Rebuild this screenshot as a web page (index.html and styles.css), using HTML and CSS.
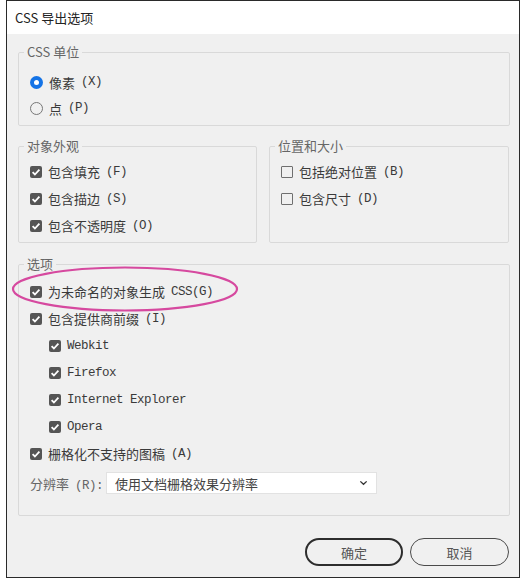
FILE: index.html
```html
<!DOCTYPE html>
<html lang="zh-CN">
<head>
    <meta charset="UTF-8">
    <title>CSS 导出选项</title>
    <link rel="stylesheet" href="styles.css">
</head>
<body>
    <div class="dialog">
        <div class="titlebar">CSS 导出选项</div>

        <div class="content">
            <fieldset class="group units">
                <legend>CSS 单位</legend>
                <div class="row"><span class="radio on"></span>像素<span class="key">(X)</span></div>
                <div class="row"><span class="radio"></span>点<span class="key">(P)</span></div>
            </fieldset>

            <div class="pair">
                <fieldset class="group">
                    <legend>对象外观</legend>
                    <div class="row tall"><span class="check on"><svg viewBox="0 0 12 12"><path d="M2.6 6.2l2.3 2.3 4.5-4.8"/></svg></span>包含填充<span class="key">(F)</span></div>
                    <div class="row tall"><span class="check on"><svg viewBox="0 0 12 12"><path d="M2.6 6.2l2.3 2.3 4.5-4.8"/></svg></span>包含描边<span class="key">(S)</span></div>
                    <div class="row tall"><span class="check on"><svg viewBox="0 0 12 12"><path d="M2.6 6.2l2.3 2.3 4.5-4.8"/></svg></span>包含不透明度<span class="key">(O)</span></div>
                </fieldset>
                <fieldset class="group">
                    <legend>位置和大小</legend>
                    <div class="row tall"><span class="check"></span>包括绝对位置<span class="key">(B)</span></div>
                    <div class="row tall"><span class="check"></span>包含尺寸<span class="key">(D)</span></div>
                </fieldset>
            </div>

            <fieldset class="group options">
                <legend>选项</legend>
                <div class="row tall"><span class="check on"><svg viewBox="0 0 12 12"><path d="M2.6 6.2l2.3 2.3 4.5-4.8"/></svg></span>为未命名的对象生成<span class="key">CSS(G)</span></div>
                <div class="row tall"><span class="check on"><svg viewBox="0 0 12 12"><path d="M2.6 6.2l2.3 2.3 4.5-4.8"/></svg></span>包含提供商前缀<span class="key">(I)</span></div>
                <div class="row tall sub"><span class="check on"><svg viewBox="0 0 12 12"><path d="M2.6 6.2l2.3 2.3 4.5-4.8"/></svg></span><span class="en">Webkit</span></div>
                <div class="row tall sub"><span class="check on"><svg viewBox="0 0 12 12"><path d="M2.6 6.2l2.3 2.3 4.5-4.8"/></svg></span><span class="en">Firefox</span></div>
                <div class="row tall sub"><span class="check on"><svg viewBox="0 0 12 12"><path d="M2.6 6.2l2.3 2.3 4.5-4.8"/></svg></span><span class="en">Internet Explorer</span></div>
                <div class="row tall sub"><span class="check on"><svg viewBox="0 0 12 12"><path d="M2.6 6.2l2.3 2.3 4.5-4.8"/></svg></span><span class="en">Opera</span></div>
                <div class="row tall"><span class="check on"><svg viewBox="0 0 12 12"><path d="M2.6 6.2l2.3 2.3 4.5-4.8"/></svg></span>栅格化不支持的图稿<span class="key">(A)</span></div>
                <div class="row resolution">
                    <span class="field-label">分辨率<span class="key">(R):</span></span>
                    <div class="select">
                        <span>使用文档栅格效果分辨率</span>
                        <svg class="chevron" viewBox="0 0 10 6"><path d="M1.5 1.2l3.5 3.3 3.5-3.3"/></svg>
                    </div>
                </div>
            </fieldset>
        </div>

        <div class="footer">
            <button class="btn primary">确定</button>
            <button class="btn">取消</button>
        </div>

        <!-- annotation drawn over the screenshot -->
        <svg class="mark" viewBox="0 0 240 50">
            <ellipse cx="117" cy="24" rx="112" ry="21.5"/>
        </svg>
    </div>
</body>
</html>
```

FILE: styles.css
```css
body {
    margin: 0;
    background-color: #fff;
    font-family: "Noto Sans CJK SC", sans-serif;
    color: #3a3a3a;
}

.dialog {
    position: relative;
    width: 514px;
    height: 578px;
    margin-left: 6px;
    box-sizing: border-box;
    border: 1px solid #2a2a2a;
    display: flex;
    flex-direction: column;
    background-color: #f0f0f0;
}

.titlebar {
    height: 33px;
    line-height: 33px;
    padding-left: 8px;
    background-color: #fff;
    font-size: 13px;
    color: #222;
}

.content {
    padding: 0 9px 0 11px;
}

.group {
    margin: 0;
    min-width: 0;
    padding: 0 10px 3px 11px;
    border: 1px solid #d9d9d9;
    border-radius: 2px;
}

.group legend {
    margin-left: -6px;
    padding: 0 3px;
    line-height: 18px;
    font-size: 13px;
    color: #666;
}

.units {
    margin-top: 9px;
    padding-top: 8px;
    padding-bottom: 4px;
}

.pair {
    display: grid;
    grid-template-columns: 239px 240px;
    gap: 12px;
    margin-top: 11px;
}

.pair .group {
    padding-top: 3px;
}

.options {
    margin-top: 12px;
    padding-top: 5px;
    padding-bottom: 19px;
}

.row {
    display: flex;
    align-items: center;
    height: 26px;
    font-size: 13px;
    white-space: nowrap;
}

.row.tall {
    height: 27px;
}

.row.sub {
    padding-left: 19px;
}

.key,
.en {
    font-family: "Liberation Mono", monospace;
    font-size: 12.5px;
    letter-spacing: -0.5px;
}

.key {
    margin-left: 6px;
}

.radio {
    width: 13px;
    height: 13px;
    margin-right: 6px;
    border: 1px solid #777;
    border-radius: 50%;
    box-sizing: border-box;
    display: flex;
    align-items: center;
    justify-content: center;
}

.radio.on {
    border: none;
    background-color: #1473e6;
}

.radio.on::after {
    content: "";
    width: 5px;
    height: 5px;
    border-radius: 50%;
    background-color: #fff;
}

.check {
    width: 12px;
    height: 12px;
    margin-right: 6px;
    border: 1px solid #6f6f6f;
    border-radius: 1px;
    box-sizing: border-box;
    display: flex;
}

.check.on {
    border: none;
    border-radius: 2px;
    background-color: #555;
}

.check svg {
    width: 12px;
    height: 12px;
    fill: none;
    stroke: #fff;
    stroke-width: 1.8;
}

.resolution {
    margin-top: 3px;
    gap: 3px;
}

.field-label {
    color: #666;
}

.select {
    width: 271px;
    height: 22px;
    box-sizing: border-box;
    padding: 0 8px;
    border: 1px solid #e2e2e2;
    background-color: #fff;
    display: flex;
    align-items: center;
    justify-content: space-between;
    color: #444;
}

.chevron {
    width: 9px;
    height: 6px;
    fill: none;
    stroke: #333;
    stroke-width: 1.5;
}

.footer {
    display: flex;
    justify-content: flex-end;
    gap: 7px;
    padding: 22px 10px 0 0;
}

.btn {
    width: 99px;
    height: 28px;
    border: 1px solid #4a4a4a;
    border-radius: 14px;
    background-color: transparent;
    font-family: "Noto Sans CJK SC", sans-serif;
    font-size: 13px;
    color: #555;
}

.btn.primary {
    width: 98px;
    border: 2px solid #2d2d2d;
}

.mark {
    position: absolute;
    left: 1px;
    top: 264px;
    width: 240px;
    height: 50px;
    fill: none;
    stroke: #d6499f;
    stroke-width: 2.2;
}
```
